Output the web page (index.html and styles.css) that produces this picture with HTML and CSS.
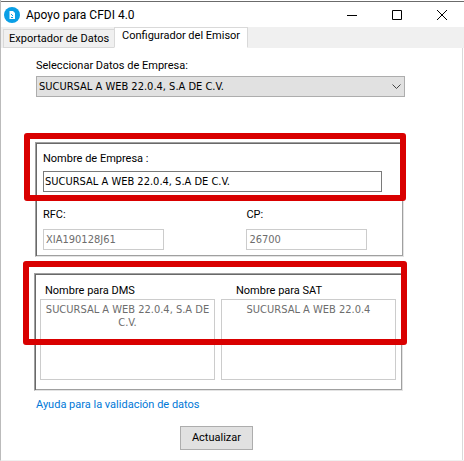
FILE: index.html
```html
<!DOCTYPE html>
<html lang="es">

<head>
    <meta charset="UTF-8">
    <meta name="viewport" content="width=device-width, initial-scale=1.0">
    <title>Apoyo para CFDI 4.0</title>
    <link rel="stylesheet" href="styles.css">
</head>

<body>
    <div class="window">
        <header class="titlebar">
            <svg class="app-icon" width="16" height="16" viewBox="0 0 16 16">
                <circle cx="8" cy="8" r="8" fill="#0a9fe6" />
                <path d="M5.5 4h3.5l2 2v6H5.5z" fill="#fff" />
                <path d="M7 7h1v1H7zM8 8h1v1H8zM7 10h2v1H7z" fill="#0a9fe6" />
            </svg>
            <h1 class="title">Apoyo para CFDI 4.0</h1>
            <div class="window-buttons">
                <button class="window-button" aria-label="Minimizar">
                    <svg width="10" height="10" viewBox="0 0 10 10"><path d="M0 5.5h10" stroke="#000" /></svg>
                </button>
                <button class="window-button" aria-label="Maximizar">
                    <svg width="10" height="10" viewBox="0 0 10 10"><path d="M.5.5h9v9h-9z" fill="none" stroke="#000" /></svg>
                </button>
                <button class="window-button" aria-label="Cerrar">
                    <svg width="10" height="10" viewBox="0 0 10 10"><path d="M0 0l10 10M10 0L0 10" stroke="#000" /></svg>
                </button>
            </div>
        </header>

        <div class="tabs" role="tablist">
            <button class="tab" role="tab">Exportador de Datos</button>
            <button class="tab tab-active" role="tab" aria-selected="true">Configurador del Emisor</button>
        </div>

        <main class="panel">
            <label for="empresa">Seleccionar Datos de Empresa:</label>
            <div class="select-box">
                <select class="select" id="empresa">
                    <option>SUCURSAL A WEB 22.0.4, S.A DE C.V.</option>
                </select>
                <svg class="select-arrow" width="9" height="6" viewBox="0 0 9 6"><path d="M.5.5l4 4 4-4" fill="none" stroke="#444" /></svg>
            </div>

            <section class="group company">
                <label for="nombre">Nombre de Empresa :</label>
                <input class="field" type="text" id="nombre" value="SUCURSAL A WEB 22.0.4, S.A DE C.V.">
                <div class="columns">
                    <div class="column">
                        <label for="rfc">RFC:</label>
                        <input class="field field-small" type="text" id="rfc" value="XIA190128J61" disabled>
                    </div>
                    <div class="column">
                        <label for="cp">CP:</label>
                        <input class="field field-small" type="text" id="cp" value="26700" disabled>
                    </div>
                </div>
                <div class="highlight highlight-company"></div>
            </section>

            <section class="group names">
                <div class="name">
                    <label for="dms">Nombre para DMS</label>
                    <textarea class="area" id="dms" disabled>SUCURSAL A WEB 22.0.4, S.A DE C.V.</textarea>
                </div>
                <div class="name name-sat">
                    <label for="sat">Nombre para SAT</label>
                    <textarea class="area" id="sat" disabled>SUCURSAL A WEB 22.0.4</textarea>
                </div>
                <div class="highlight highlight-names"></div>
            </section>

            <a class="help" href="#">Ayuda para la validación de datos</a>
            <button class="update">Actualizar</button>
        </main>
    </div>
</body>

</html>
```

FILE: styles.css
```css
* {
    box-sizing: border-box;
}

body {
    margin: 0;
    background: #fff;
    color: #000;
}

body,
button {
    font-family: Roboto, sans-serif;
    font-size: 11px;
    line-height: 14px;
}

input,
select,
textarea {
    font-family: "DejaVu Sans Condensed", "DejaVu Sans", sans-serif;
    font-size: 11px;
    line-height: 14px;
}

.window {
    display: flex;
    flex-direction: column;
    min-height: 100vh;
    padding-top: 1px;
    border-left: 1px solid #bbb;
    border-bottom: 1px solid #f0f0f0;
}

.titlebar {
    display: flex;
    align-items: center;
    height: 26px;
    padding-left: 3px;
    border-top: 1px solid #6b6b6b;
}

.title {
    margin: 0 0 0 6px;
    font-size: 12px;
    font-weight: normal;
    line-height: 16px;
}

.window-buttons {
    display: flex;
    margin-left: auto;
}

.window-button {
    display: flex;
    align-items: center;
    justify-content: center;
    width: 45px;
    height: 24px;
    padding: 0;
    border: none;
    background: transparent;
}

.tabs {
    position: relative;
    display: flex;
    align-items: flex-end;
    height: 21px;
    padding-left: 2px;
    background: #f0f0f0;
}

.tab {
    height: 19px;
    padding: 0 5px;
    border: 1px solid #d9d9d9;
    border-right: none;
    background: #f0f0f0;
    color: #000;
}

.tab-active {
    height: 21px;
    padding: 0 7px 3px;
    border-right: 1px solid #d9d9d9;
    border-bottom-color: #fff;
    background: #fff;
}

.panel {
    display: flex;
    flex: 1;
    flex-direction: column;
    margin: -1px 1px 0 0;
    padding: 11px 57px 10px 35px;
    border-top: 1px solid #d9d9d9;
    border-right: 1px solid #d9d9d9;
}

.select-box {
    display: grid;
    align-items: center;
    margin-top: 3px;
}

.select,
.select-arrow {
    grid-area: 1 / 1;
}

.select {
    width: 100%;
    height: 21px;
    padding: 0 20px 0 2px;
    border: 1px solid #adadad;
    border-radius: 0;
    background: #e1e1e1;
    color: #000;
    appearance: none;
}

.select-arrow {
    justify-self: end;
    margin-right: 4px;
    pointer-events: none;
}

/* sunken two-tone border */
.group {
    position: relative;
    border: 1px solid;
    border-color: #a0a0a0 #e3e3e3 #e3e3e3 #a0a0a0;
    box-shadow: inset 1px 1px #696969, inset -1px -1px #a0a0a0;
}

.company {
    display: flex;
    flex-direction: column;
    margin: 45px 1px 0 -1px;
    padding: 9px 21px 6px 7px;
}

.field {
    height: 21px;
    margin-top: 5px;
    padding: 0 1px;
    border: 1px solid #7a7a7a;
    background: #fff;
    color: #000;
}

.field:disabled,
.area:disabled {
    border-color: #ccc;
    color: #6d6d6d;
}

.columns {
    display: grid;
    grid-template-columns: 3fr 2fr;
    margin-top: 16px;
}

.column {
    display: flex;
    flex-direction: column;
}

.field-small {
    width: 121px;
    margin-top: 7px;
    padding: 0 2px;
}

.names {
    display: flex;
    gap: 6px;
    margin: 16px 2px 0 -2px;
    padding: 10px 6px 10px 5px;
}

.name {
    display: flex;
    flex: 1;
    flex-direction: column;
}

.name label {
    padding-left: 5px;
}

.name-sat label {
    padding-left: 15px;
}

.area {
    width: 100%;
    height: 81px;
    margin-top: 1px;
    padding: 3px 2px;
    border: 1px solid #ccc;
    background: #fff;
    line-height: 13px;
    text-align: center;
    resize: none;
    overflow: hidden;
}

/* red frames over the fields to check */
.highlight {
    position: absolute;
    border: 6px solid #d90000;
    border-radius: 3px;
    pointer-events: none;
}

.highlight-company {
    top: -10px;
    right: -3px;
    left: -12px;
    height: 68px;
}

.highlight-names {
    top: -13px;
    right: -5px;
    left: -12px;
    height: 84px;
}

.help {
    align-self: flex-start;
    margin-top: 7px;
    color: #0078d7;
    text-decoration: none;
}

.update {
    align-self: center;
    width: 73px;
    height: 24px;
    margin: 14px 8px 0 0;
    padding: 0;
    border: 1px solid #adadad;
    background: #e1e1e1;
    color: #000;
}
```
